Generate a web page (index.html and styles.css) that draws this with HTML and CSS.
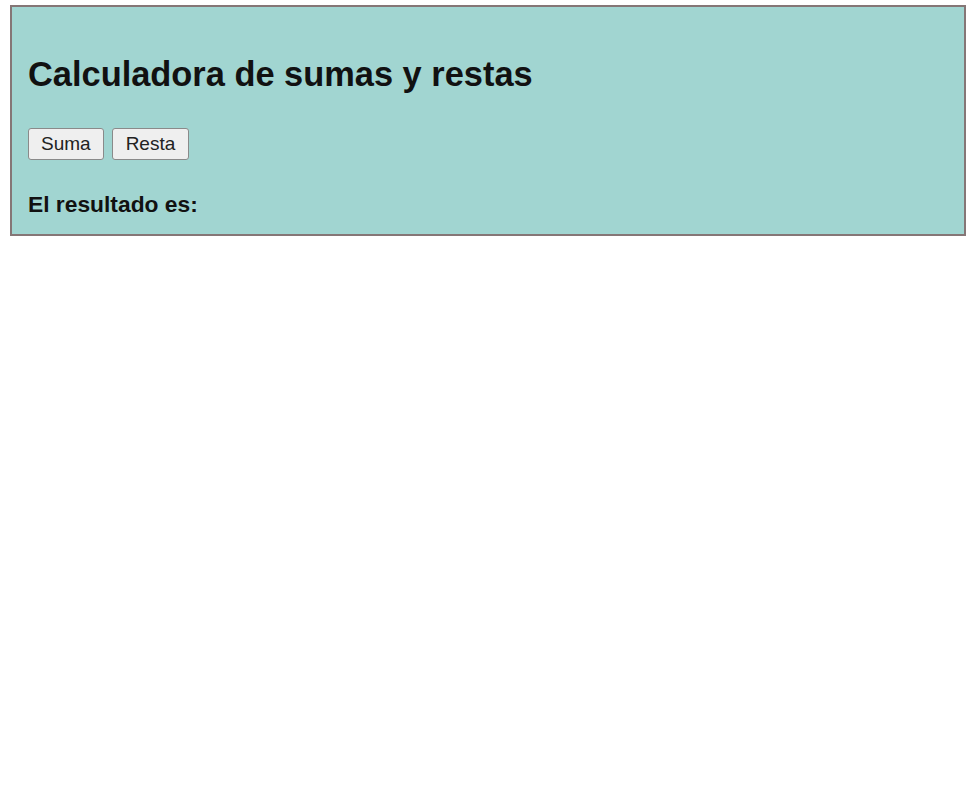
FILE: index.html
```html
<!DOCTYPE html>
<html lang="es">
<head>
<meta charset="utf-8">
<title>Calculadora</title>
<link rel="stylesheet" href="styles.css">
</head>
<body>
<div class="panel">
  <h1 class="title">Calculadora de sumas y restas</h1>
  <div class="actions">
    <button class="btn">Suma</button>
    <button class="btn">Resta</button>
  </div>
  <p class="result">El resultado es:</p>
</div>
</body>
</html>
```
FILE: styles.css
```css
html, body {
  background: #ffffff;
}
body {
  margin: 5px 9px 0 10px;
  font-family: "Liberation Sans", Arial, sans-serif;
  color: #111111;
}
.panel {
  background: #a1d5d1;
  border: 2px solid #857676;
  padding: 47px 16px 17px 16px;
}
.title {
  margin: 0;
  font-size: 34.4px;
  line-height: 40px;
  font-weight: bold;
}
.actions {
  display: flex;
  gap: 8px;
  margin-top: 34px;
}
.btn {
  font-family: "Liberation Sans", Arial, sans-serif;
  font-size: 19px;
  line-height: 22px;
  height: 32px;
  padding: 0 12px;
  background: #efefef;
  color: #222222;
  border: 1px solid #8a8a8a;
  border-radius: 3px;
}
.btn + .btn {
  padding: 0 13px;
}
.result {
  margin: 31px 0 0 0;
  font-size: 22.8px;
  line-height: 26px;
  font-weight: bold;
}
```
